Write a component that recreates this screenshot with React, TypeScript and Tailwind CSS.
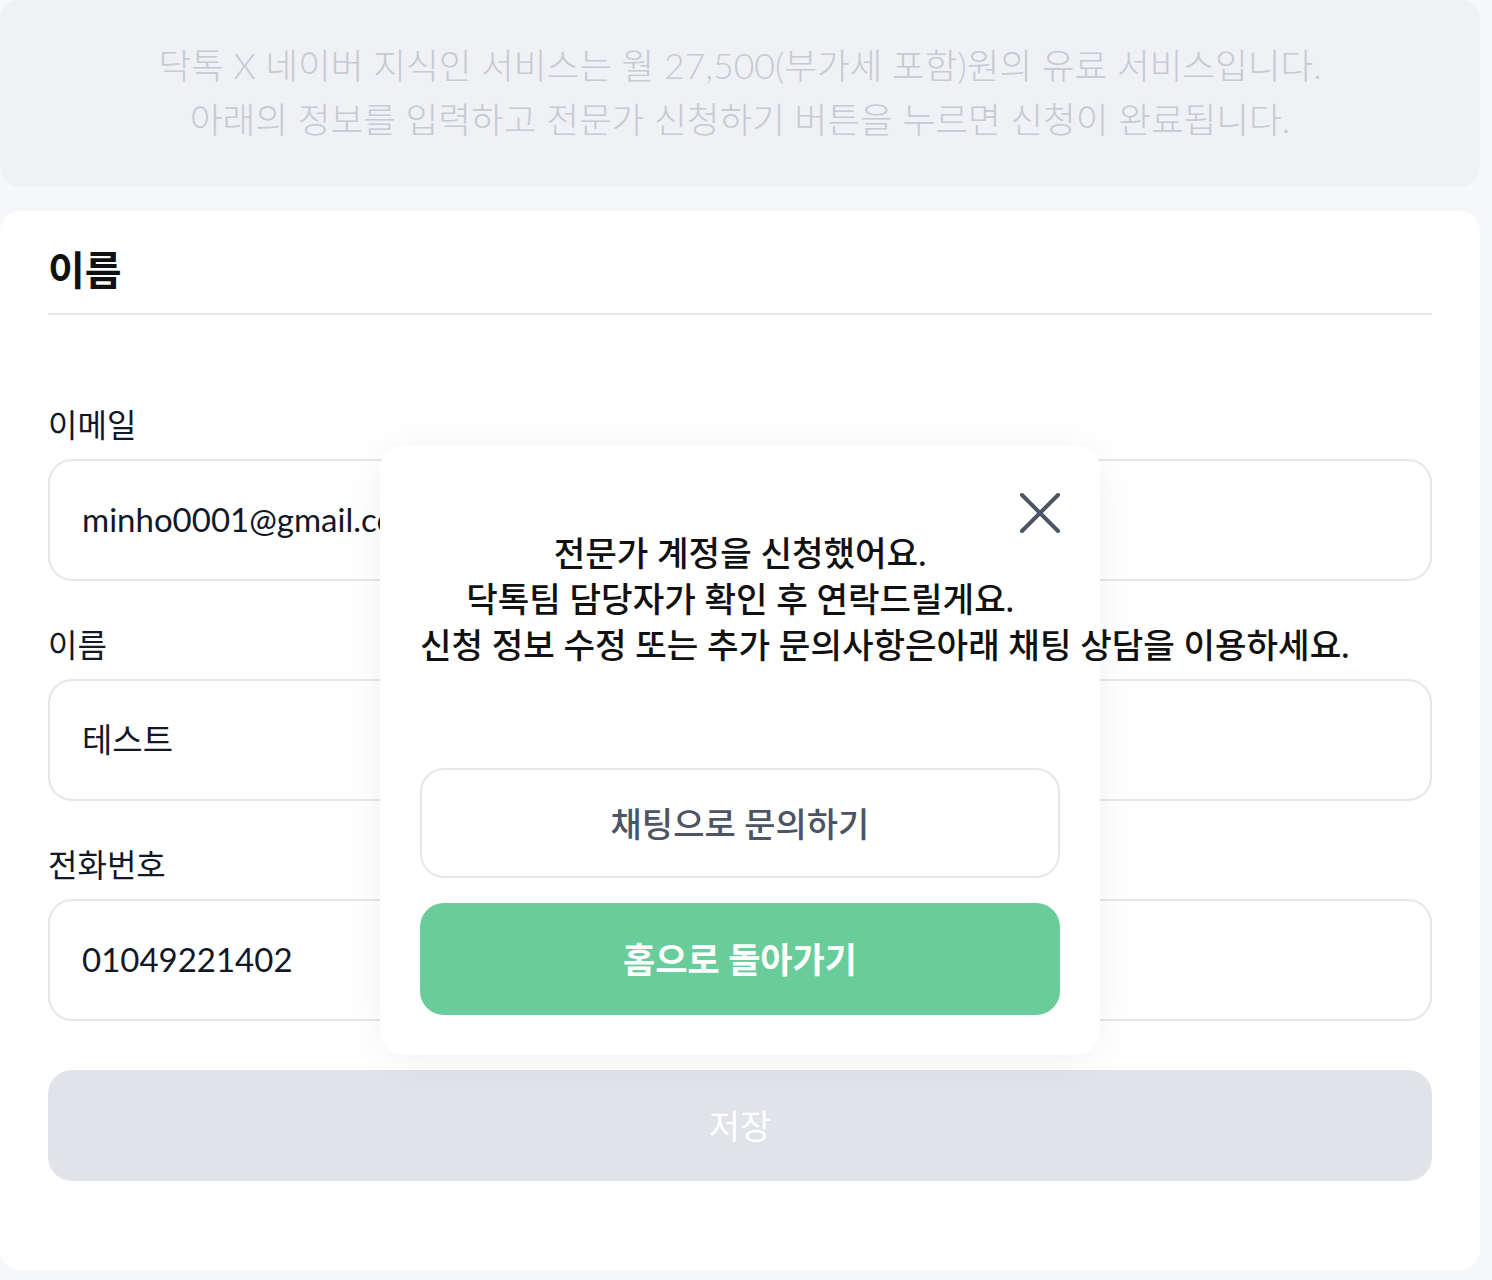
import React from "react";

const font = { fontFamily: 'Lato, "Noto Sans CJK KR", sans-serif' };

function Field({ label, value }: { label: string; value: string }) {
  return (
    <div className="flex flex-col">
      <div className="text-[32px] leading-[45px] text-[#111827]">{label}</div>
      <div className="mt-[12px] h-[122px] rounded-[24px] border-2 border-[#e5e7eb] flex items-center pl-[32px] text-[33px] text-[#111827] overflow-hidden whitespace-nowrap">
        {value}
      </div>
    </div>
  );
}

export default function App() {
  return (
    <div className="relative min-h-[1280px] bg-[#f6f7fa]" style={font}>
      <div className="w-[1480px]">
        <div className="h-[187px] rounded-[20px] bg-[#eff1f5] flex flex-col items-center justify-center text-[35.6px] leading-[54px] text-[#c5cad3] font-light">
          <div className="-mt-[2px]">닥톡 X 네이버 지식인 서비스는 월 27,500(부가세 포함)원의 유료 서비스입니다.</div>
          <div>아래의 정보를 입력하고 전문가 신청하기 버튼을 누르면 신청이 완료됩니다.</div>
        </div>
        <div className="mt-[24px] h-[1059px] rounded-[20px] bg-white px-[48px] pt-[32px]">
          <div className="pb-[16px] border-b-2 border-[#e5e7eb] text-[40px] leading-[54px] font-bold text-[#111]">
            이름
          </div>
          <div className="mt-[87px] flex flex-col gap-[41px]">
            <Field label="이메일" value="minho0001@gmail.com" />
            <Field label="이름" value="테스트" />
            <Field label="전화번호" value="01049221402" />
          </div>
          <div className="mt-[49px] h-[111px] rounded-[24px] bg-[#e0e3e8] flex items-center justify-center text-[34px] text-white">
            저장
          </div>
        </div>
      </div>

      <div className="absolute left-[380px] top-[445px] w-[720px] h-[610px] rounded-[24px] bg-white shadow-[0_4px_40px_rgba(0,0,0,0.06)] px-[40px] pt-[85px]">
        <svg
          className="absolute right-[40px]"
          style={{ top: 48 }}
          width="40"
          height="40"
          viewBox="0 0 40 40"
          fill="none"
          stroke="#4b5563"
          strokeWidth="4"
          strokeLinecap="round"
        >
          <path d="M2 2 L38 38 M38 2 L2 38" />
        </svg>
        <div className="text-center text-[34.3px] leading-[46px] font-medium text-[#111] whitespace-pre">
          <div>전문가 계정을 신청했어요.</div>
          <div>닥톡팀 담당자가 확인 후 연락드릴게요.</div>
          <div className="text-left">신청 정보 수정 또는 추가 문의사항은아래 채팅 상담을 이용하세요.</div>
        </div>
        <div className="mt-[100px] flex flex-col gap-[25px]">
          <div className="h-[110px] rounded-[24px] border-2 border-[#e5e7eb] flex items-center justify-center text-[34px] font-medium text-[#4b5563]">
            채팅으로 문의하기
          </div>
          <div className="h-[112px] rounded-[24px] bg-[#68cd9b] flex items-center justify-center text-[35px] font-bold text-white">
            홈으로 돌아가기
          </div>
        </div>
      </div>
    </div>
  );
}
